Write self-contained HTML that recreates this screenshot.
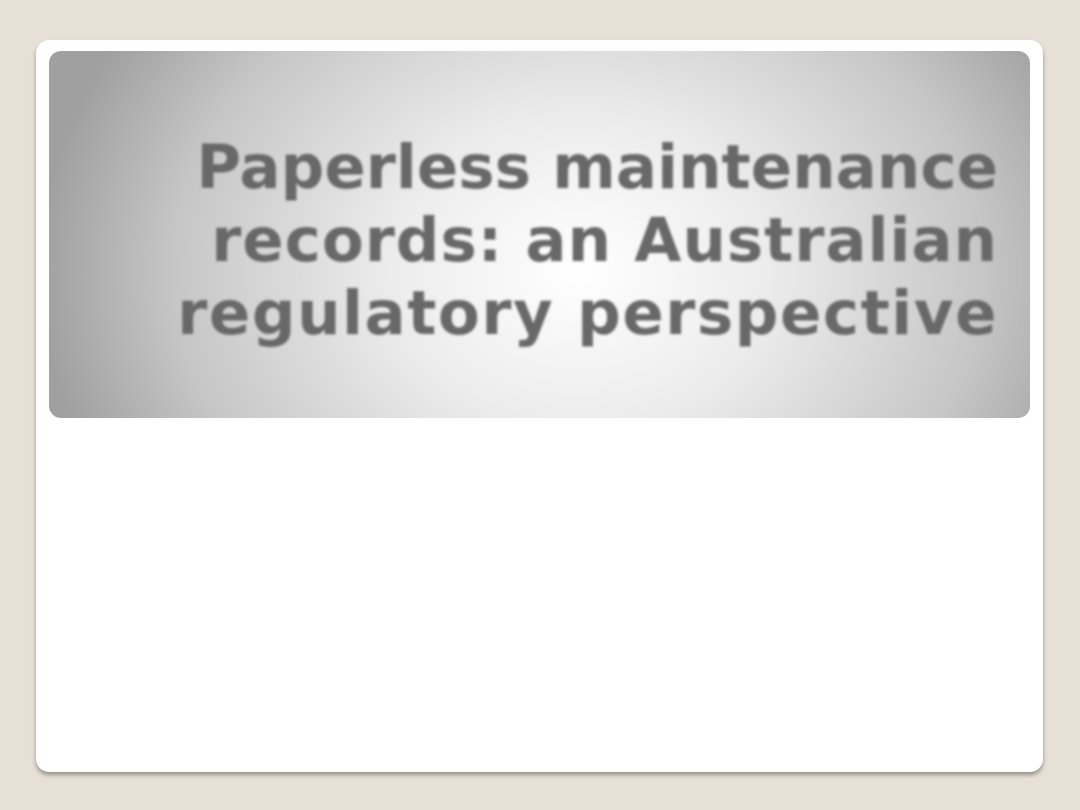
<!DOCTYPE html>
<html><head><style>
html,body{margin:0;padding:0;}
body{width:1080px;height:810px;background:#e6e0d6;position:relative;overflow:hidden;}
.card{position:absolute;left:36px;top:40px;width:1007px;height:732px;background:#fff;border-radius:13px;box-shadow:0 3px 4px rgba(0,0,0,0.35);}
.hdr{position:absolute;left:49px;top:51px;width:981px;height:367px;border-radius:12px;
background:radial-gradient(ellipse 55% 120% at 54% 60%,#ffffff 0%,#ececec 35%,#c6c6c6 75%,#a0a0a0 100%);}
.t{position:absolute;right:82px;top:131px;text-align:right;font-family:"DejaVu Sans",sans-serif;font-weight:bold;font-size:61px;line-height:73px;color:#686868;filter:blur(1.2px);white-space:nowrap;}
.t div{display:block}
</style></head><body>
<div class="card"></div>
<div class="hdr"></div>
<div class="t"><div style="letter-spacing:0.05px">Paperless maintenance</div><div style="letter-spacing:1.0px">records: an Australian</div><div style="letter-spacing:1.55px">regulatory perspective</div></div>
</body></html>
